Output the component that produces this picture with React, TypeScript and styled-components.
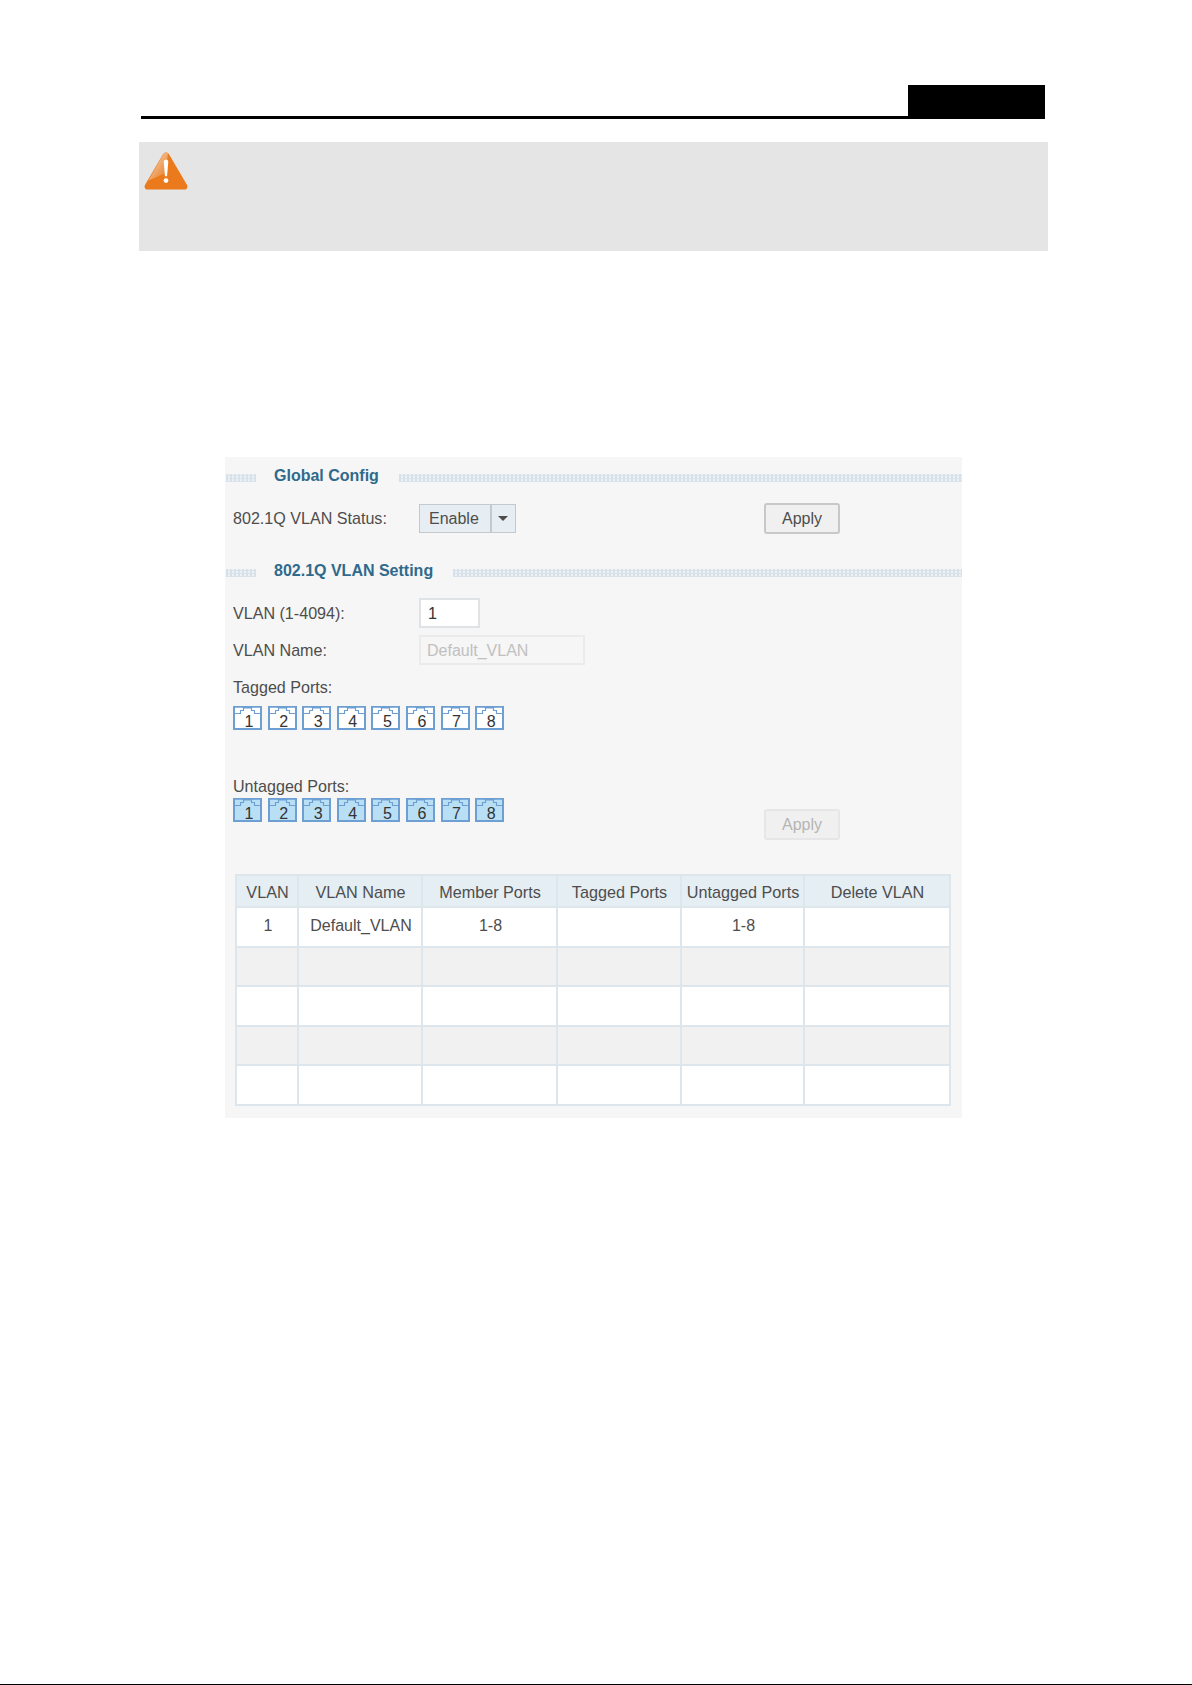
import React from 'react'
import styled, { createGlobalStyle } from 'styled-components'

const PORTS = [1, 2, 3, 4, 5, 6, 7, 8]
const COLUMNS = ['VLAN', 'VLAN Name', 'Member Ports', 'Tagged Ports', 'Untagged Ports', 'Delete VLAN']
const ROWS = [
  ['1', 'Default_VLAN', '1-8', '', '1-8', ''],
  ['', '', '', '', '', ''],
  ['', '', '', '', '', ''],
  ['', '', '', '', '', ''],
  ['', '', '', '', '', ''],
]

export default function App() {
  return (
    <>
      <GlobalStyle />
      <Page>
        <Header>
          <HeaderTab />
        </Header>

        <Warning>
          <WarningIcon />
        </Warning>

        <Panel>
          <SectionTitle>
            <TitleDots />
            <TitleText>Global Config</TitleText>
            <TitleDots $grow />
          </SectionTitle>

          <StatusRow>
            <Label>802.1Q VLAN Status:</Label>
            <Select>
              <SelectValue>Enable</SelectValue>
              <SelectArrow />
            </Select>
            <ApplyButton>Apply</ApplyButton>
          </StatusRow>

          <SecondTitle>
            <TitleDots />
            <TitleText>802.1Q VLAN Setting</TitleText>
            <TitleDots $grow />
          </SecondTitle>

          <FieldRow>
            <Label>VLAN (1-4094):</Label>
            <IdInput>1</IdInput>
          </FieldRow>

          <NameRow>
            <Label>VLAN Name:</Label>
            <NameInput>Default_VLAN</NameInput>
          </NameRow>

          <TaggedLabel>Tagged Ports:</TaggedLabel>
          <PortRow>
            {PORTS.map(n => (
              <Port key={n} n={n} />
            ))}
          </PortRow>

          <UntaggedBlock>
            <div>
              <UntaggedLabel>Untagged Ports:</UntaggedLabel>
              <PortRow>
                {PORTS.map(n => (
                  <Port key={n} n={n} selected />
                ))}
              </PortRow>
            </div>
            <DisabledApply disabled>Apply</DisabledApply>
          </UntaggedBlock>

          <Table>
            <thead>
              <tr>
                {COLUMNS.map(c => (
                  <HeadCell key={c}>{c}</HeadCell>
                ))}
              </tr>
            </thead>
            <tbody>
              {ROWS.map((row, i) => (
                <BodyRow key={i} $odd={i % 2 === 1}>
                  {row.map((cell, j) => (
                    <BodyCell key={j}>{cell}</BodyCell>
                  ))}
                </BodyRow>
              ))}
            </tbody>
          </Table>
        </Panel>
      </Page>
    </>
  )
}

function Port({ n, selected }: { n: number; selected?: boolean }) {
  return (
    <PortBox $selected={selected}>
      <PortNotch viewBox="0 0 27 8" width="27" height="8">
        <path
          d="M0.5 6.5H6.5V3.5H9.5V1H17.5V3.5H20.5V6.5H26.5"
          fill="none"
          stroke="#6d9fd3"
          strokeWidth="1.2"
        />
        <path d="M1 0.8H8.5V2.5H5.5V5.5H1ZM18.5 0.8H26V5.5H21.5V2.5H18.5Z" fill={selected ? '#b9dff5' : '#ffffff'} />
      </PortNotch>
      <PortNumber>{n}</PortNumber>
    </PortBox>
  )
}

function WarningIcon() {
  return (
    <svg width="44" height="38" viewBox="0 0 46 40" style={{ display: 'block' }}>
      <defs>
        <linearGradient id="shine" x1="0.1" y1="0.1" x2="0.7" y2="0.8">
          <stop offset="0" stopColor="#f6d2ae" />
          <stop offset="1" stopColor="#ec8f45" />
        </linearGradient>
      </defs>
      <path
        d="M20 2.2C21.5 -0.2 24.5 -0.2 26 2.2L45 34.5C46.4 37 45 39.5 42.5 39.5H3.5C1 39.5 -0.4 37 1 34.5Z"
        fill="#ea7a1c"
      />
      <path d="M20.2 2.4C21.6 0 24 0 25 1.5L23 22L4.5 30Z" fill="url(#shine)" />
      <path d="M20.6 10.2C20.6 7.6 25.4 7.6 25.4 10.2L24.1 25.5H21.9Z" fill="#ffffff" />
      <circle cx="23" cy="30" r="2.5" fill="#ffffff" />
    </svg>
  )
}

const GlobalStyle = createGlobalStyle`
  html, body {
    margin: 0;
    padding: 0;
    background: #ffffff;
  }
  * {
    box-sizing: border-box;
  }
`

const Page = styled.div`
  height: 1685px;
  border-bottom: 1px solid #000;
  font-family: 'Liberation Sans', Arial, sans-serif;
  font-size: 16.1px;
  color: #4d4d4d;
  overflow: hidden;
`

const Header = styled.div`
  display: flex;
  justify-content: flex-end;
  margin: 85px 147px 0 141px;
  height: 34px;
  border-bottom: 3px solid #000;
`

const HeaderTab = styled.div`
  width: 137px;
  height: 34px;
  background: #000;
`

const Warning = styled.div`
  margin: 23px 144px 0 139px;
  height: 109px;
  padding: 10px 0 0 5px;
  background: #e5e5e5;
`

const Panel = styled.div`
  margin: 206px 230px 0 225px;
  height: 661px;
  padding-top: 11px;
  background: #f6f6f6;
`

const SectionTitle = styled.div`
  display: flex;
  align-items: center;
  height: 16px;
  padding-left: 1px;
`

const SecondTitle = styled(SectionTitle)`
  margin-top: 29px;
`

const TitleDots = styled.div<{ $grow?: boolean }>`
  flex: ${p => (p.$grow ? '1 1 auto' : '0 0 30px')};
  height: 8px;
  margin-top: 3px;
  background-color: #eef1f3;
  background-image: repeating-linear-gradient(90deg, #d6e1ea 0 2px, transparent 2px 4px),
    repeating-linear-gradient(0deg, #dbe4ec 0 1px, transparent 1px 3px);
`

const TitleText = styled.div`
  margin: 0 20px 0 18px;
  font-size: 16px;
  font-weight: 700;
  color: #2f6a8c;
  white-space: nowrap;
`

const Label = styled.div`
  width: 186px;
  flex: none;
  white-space: nowrap;
`

const StatusRow = styled.div`
  display: flex;
  align-items: center;
  margin-top: 19px;
  height: 31px;
  padding-left: 8px;
`

const Select = styled.div`
  display: flex;
  width: 97px;
  height: 29px;
  border: 1px solid #c4c9cc;
  background: #e6eef3;
`

const SelectValue = styled.div`
  flex: 1;
  padding-left: 9px;
  line-height: 28px;
  font-size: 16px;
  border-right: 2px solid #c4c9cc;
`

const SelectArrow = styled.div`
  flex: none;
  width: 23px;
  position: relative;
  &::after {
    content: '';
    position: absolute;
    left: 6px;
    top: 11px;
    border-left: 5px solid transparent;
    border-right: 5px solid transparent;
    border-top: 5px solid #4d4d4d;
  }
`

const ApplyButton = styled.button`
  width: 76px;
  height: 31px;
  margin-left: auto;
  margin-right: 122px;
  padding: 0;
  border: 2px solid #c8c8c8;
  border-radius: 3px;
  background: #f0f0f0;
  font-family: inherit;
  font-size: 16px;
  color: #4d4d4d;
`

const DisabledApply = styled(ApplyButton)`
  margin-top: 32px;
  border: 2px solid #e6e6e6;
  color: #b5b5b5;
`

const FieldRow = styled.div`
  display: flex;
  align-items: center;
  margin-top: 19px;
  height: 30px;
  padding-left: 8px;
`

const NameRow = styled(FieldRow)`
  margin-top: 7px;
`

const IdInput = styled.div`
  width: 61px;
  height: 30px;
  padding-left: 7px;
  border: 2px solid #dfe3e5;
  background: #fff;
  line-height: 26px;
  color: #333;
`

const NameInput = styled.div`
  width: 166px;
  height: 30px;
  padding-left: 6px;
  border: 2px solid #ebebeb;
  font-size: 16px;
  line-height: 27px;
  color: #c0c0c0;
`

const TaggedLabel = styled.div`
  margin-top: 13px;
  padding-left: 8px;
  height: 18px;
  line-height: 18px;
`

const UntaggedLabel = styled.div`
  padding-left: 8px;
  height: 18px;
  line-height: 18px;
`

const PortRow = styled.div`
  display: flex;
  gap: 5.6px;
  padding-left: 8px;
`

const PortBox = styled.div<{ $selected?: boolean }>`
  display: grid;
  width: 29px;
  height: 24px;
  margin-top: 10px;
  border: 2px solid #6d9fd3;
  background: ${p => (p.$selected ? '#b9dff5' : '#fff')};
  ${UntaggedLabel} + ${PortRow} & {
    margin-top: 3px;
  }
`

const PortNotch = styled.svg`
  grid-area: 1 / 1;
  display: block;
  margin: -1px 0 0 -1px;
`

const PortNumber = styled.div`
  grid-area: 1 / 1;
  text-align: center;
  font-size: 16px;
  line-height: 20px;
  margin: 4px 0 0 2px;
  color: #333;
`

const UntaggedBlock = styled.div`
  display: flex;
  align-items: flex-start;
  justify-content: space-between;
  margin-top: 47px;
`

const Table = styled.table`
  width: 716px;
  margin: 34px 0 0 10px;
  border-collapse: collapse;
  table-layout: fixed;
  border: 2px solid #dde6ec;
  background: #fff;
`

const HeadCell = styled.th`
  height: 32px;
  padding: 3px 0 0 1px;
  border: 2px solid #dde6ec;
  background: #e5eef3;
  font-weight: 400;
  font-size: 16.2px;
  white-space: nowrap;
  &:nth-child(1) { width: 62px; }
  &:nth-child(2) { width: 124px; }
  &:nth-child(3) { width: 135px; }
  &:nth-child(4) { width: 124px; }
  &:nth-child(5) { width: 123px; }
`

const BodyRow = styled.tr<{ $odd: boolean }>`
  background: ${p => (p.$odd ? '#f1f1f1' : '#ffffff')};
`

const BodyCell = styled.td`
  height: 39.5px;
  padding: 0 0 2px 2px;
  border: 2px solid #dde6ec;
  font-size: 16px;
  text-align: center;
`
